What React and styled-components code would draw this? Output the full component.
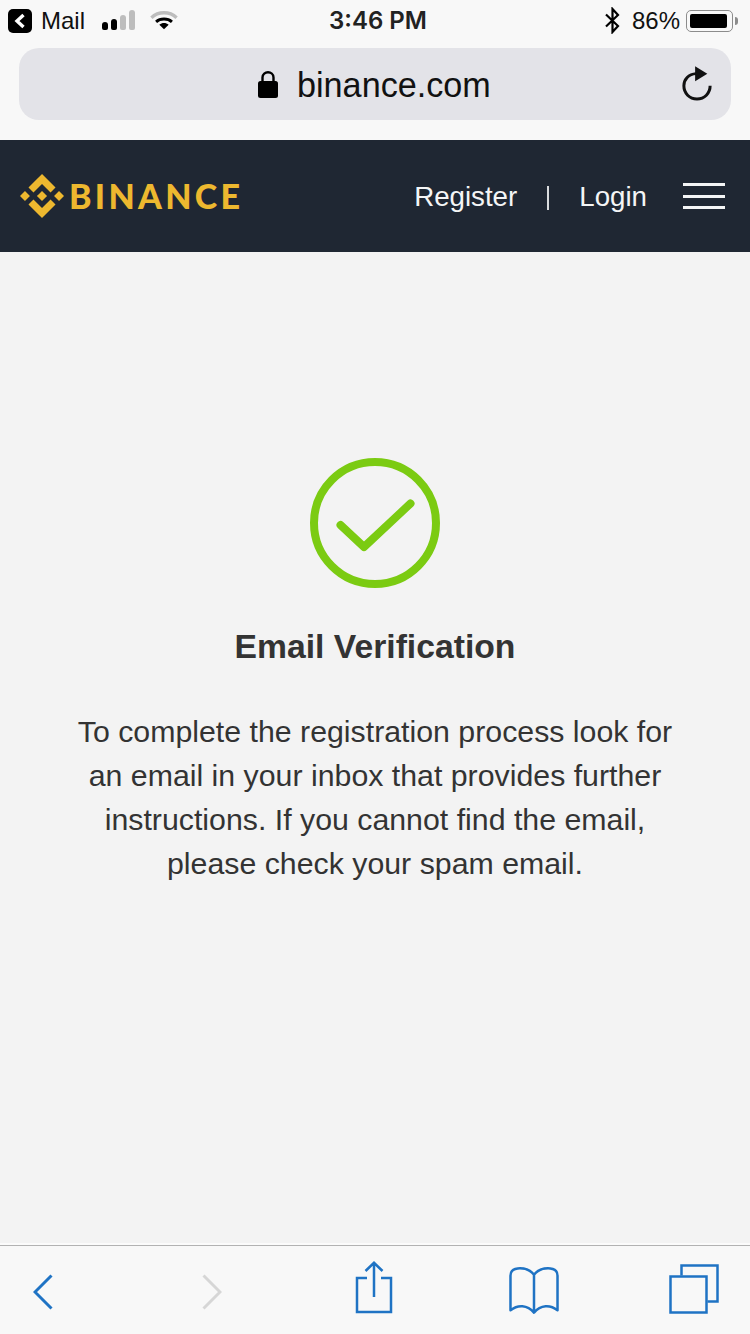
import React from "react";
import styled, { createGlobalStyle } from "styled-components";

const Global = createGlobalStyle`
    html, body {
        margin: 0;
        padding: 0;
        background: #f3f3f3;
    }
    * {
        box-sizing: border-box;
    }
`

const App = () => (
    <Page>
        <Global />
        <Chrome>
            <StatusBar>
                <StatusLeft>
                    <BackChip>
                        <svg width="12" height="16" viewBox="0 0 12 16">
                            <path d="M9.5 2 L3 8 L9.5 14" fill="none" stroke="#fff" strokeWidth="3.4" />
                        </svg>
                    </BackChip>
                    <StatusText>Mail</StatusText>
                    <Signal>
                        <Bar $h={8} $on />
                        <Bar $h={11} $on />
                        <Bar $h={15} />
                        <Bar $h={20} />
                    </Signal>
                    <svg width="28" height="21" viewBox="0 0 30 22">
                        <path d="M1.5 8 C9 1 21 1 28.5 8" fill="none" stroke="#bdbdbd" strokeWidth="3.6" />
                        <path d="M6.5 12.5 C11 8.5 19 8.5 23.5 12.5" fill="none" stroke="#000" strokeWidth="3.2" />
                        <path d="M10 15.5 C13 13.2 17 13.2 20 15.5 L15 20.5 Z" fill="#000" />
                    </svg>
                </StatusLeft>
                <Clock>3:46 PM</Clock>
                <StatusRight>
                    <svg width="17" height="27" viewBox="0 0 17 27">
                        <path d="M2 7.5 L14 19 L8.5 25 V2 L14 8 L2 19.5" fill="none" stroke="#000" strokeWidth="2.2" />
                    </svg>
                    <StatusText>86%</StatusText>
                    <Battery>
                        <BatteryFill />
                    </Battery>
                    <BatteryNub />
                </StatusRight>
            </StatusBar>
            <AddressBar>
                <AddressCenter>
                    <svg width="20" height="28" viewBox="0 0 20 28">
                        <path d="M4.5 13 V7.5 C4.5 0.5 15.5 0.5 15.5 7.5 V13" fill="none" stroke="#000" strokeWidth="2.4" />
                        <rect x="0" y="11" width="20" height="17" rx="2.5" fill="#000" />
                    </svg>
                    <Domain>binance.com</Domain>
                </AddressCenter>
                <Reload>
                    <svg width="30" height="36" viewBox="0 0 32 38">
                        <path d="M15 9 C7 9.5 2 15 2 22 C2 30 8 36 16 36 C24 36 30 30 30 22" fill="none" stroke="#111" strokeWidth="3.2" />
                        <path d="M14 1 L27 9 L14 17 Z" fill="#111" />
                    </svg>
                </Reload>
            </AddressBar>
        </Chrome>
        <Header>
            <Logo>
                <svg width="44" height="44" viewBox="0 0 126.61 126.61">
                    <path fill="#edb82f" d="M38.73 53.2l24.59-24.58 24.6 24.6 14.3-14.31L63.32 0 24.43 38.9l14.3 14.3zM0 63.31l14.3-14.31 14.31 14.31-14.31 14.3zM38.73 73.41l24.59 24.59 24.6-24.6 14.31 14.29-38.9 38.91-38.9-38.9-.01-.01zM98.01 63.31l14.3-14.31 14.31 14.3-14.31 14.31zM77.83 63.3L63.32 48.78 52.59 59.51l-1.24 1.23-2.54 2.54 14.51 14.5 14.51-14.47z" />
                </svg>
                <LogoText>BINANCE</LogoText>
            </Logo>
            <Nav>
                <NavLink>Register</NavLink>
                <NavSep />
                <NavLink>Login</NavLink>
                <Burger>
                    <BurgerLine />
                    <BurgerLine />
                    <BurgerLine />
                </Burger>
            </Nav>
        </Header>
        <Main>
            <svg width="130" height="130" viewBox="0 0 130 130">
                <circle cx="65" cy="65" r="61" fill="none" stroke="#7bcb12" strokeWidth="8" />
                <path d="M30.5 67 L54 89 L100.5 45.5" fill="none" stroke="#7bcb12" strokeWidth="8" strokeLinecap="round" strokeLinejoin="round" />
            </svg>
            <Title>Email Verification</Title>
            <Message>
                <span>To complete the registration process look for</span>
                <span>an email in your inbox that provides further</span>
                <span>instructions. If you cannot find the email,</span>
                <span>please check your spam email.</span>
            </Message>
        </Main>
        <Toolbar>
            <ToolIcon $left={33} $top={28} width="20" height="36" viewBox="0 0 20 36">
                <path d="M18.5 1.5 L2 18 L18.5 34.5" fill="none" stroke="#1f73c4" strokeWidth="3" />
            </ToolIcon>
            <ToolIcon $left={149} $top={28} width="20" height="36" viewBox="0 0 20 36">
                <path d="M1.5 1.5 L18 18 L1.5 34.5" fill="none" stroke="#d6d6d6" strokeWidth="3" />
            </ToolIcon>
            <ToolIcon $left={133} $top={15} width="38" height="53" viewBox="0 0 38 53">
                <path d="M12 17 H2 V51 H36 V17 H26" fill="none" stroke="#1f73c4" strokeWidth="2.5" />
                <path d="M19 36 V2 M10.5 10 L19 1.8 L27.5 10" fill="none" stroke="#1f73c4" strokeWidth="2.5" />
            </ToolIcon>
            <ToolIcon $left={116} $top={21} width="50" height="48" viewBox="0 0 52 50">
                <path d="M26 8 C22 3 15 1 9 1.5 C4.5 2 1.5 4.5 1.5 9 V45 C9 39 19 39 26 47.5 C33 39 43 39 50.5 45 V9 C50.5 4.5 47.5 2 43 1.5 C37 1 30 3 26 8 V47.5" fill="none" stroke="#1f73c4" strokeWidth="2.6" strokeLinejoin="round" />
            </ToolIcon>
            <ToolIcon $left={110} $top={18} width="50" height="50" viewBox="0 0 50 50">
                <path d="M12.5 11.5 V1.5 H48.5 V37.5 H38.5" fill="none" stroke="#1f73c4" strokeWidth="2.5" />
                <rect x="1.5" y="12.5" width="36" height="36" fill="none" stroke="#1f73c4" strokeWidth="2.5" />
            </ToolIcon>
        </Toolbar>
    </Page>
)

const Page = styled.div`
    width: 750px;
    height: 1334px;
    display: flex;
    flex-direction: column;
    overflow: hidden;
    font-family: "Liberation Sans", Arial, sans-serif;
`

const Chrome = styled.div`
    height: 140px;
    background: #f8f8f8;
    display: flex;
    flex-direction: column;
`

const StatusBar = styled.div`
    height: 48px;
    padding: 0 12px 7px 8px;
    display: grid;
    grid-template-columns: 1fr auto 1fr;
    align-items: center;
`

const StatusLeft = styled.div`
    display: flex;
    align-items: center;
`

const BackChip = styled.div`
    width: 24px;
    height: 24px;
    margin-right: 9px;
    border-radius: 5px;
    background: #000;
    display: flex;
    align-items: center;
    justify-content: center;
`

const StatusText = styled.span`
    font-size: 24px;
    color: #111;
`

const Signal = styled.div`
    width: 33px;
    height: 20px;
    margin: 0 15px 1px 17px;
    display: flex;
    align-items: flex-end;
    justify-content: space-between;
`

const Bar = styled.div`
    width: 6px;
    height: ${p => p.$h}px;
    border-radius: 3px 3px 2px 2px;
    background: ${p => (p.$on ? "#000" : "#bdbdbd")};
`

const Clock = styled.span`
    margin-left: 10px;
    font-family: Inter, "Liberation Sans", sans-serif;
    font-size: 24px;
    font-weight: 600;
    color: #222;
`

const StatusRight = styled.div`
    display: flex;
    align-items: center;
    justify-content: flex-end;

    svg {
        margin-right: 11px;
    }
`

const Battery = styled.div`
    width: 47px;
    height: 22px;
    margin-left: 6px;
    padding: 3px;
    border: 1.5px solid #8c8c8c;
    border-radius: 5px;
`

const BatteryFill = styled.div`
    width: 37px;
    height: 100%;
    border-radius: 2px;
    background: #000;
`

const BatteryNub = styled.div`
    width: 3px;
    height: 8px;
    margin-left: 2px;
    border-radius: 0 3px 3px 0;
    background: #8c8c8c;
`

const AddressBar = styled.div`
    width: 712px;
    height: 72px;
    margin-left: 19px;
    padding: 0 19px 0 239px;
    border-radius: 20px;
    background: #e3e3e8;
    display: flex;
    align-items: center;
    justify-content: space-between;
`

const AddressCenter = styled.div`
    display: flex;
    align-items: center;
    gap: 19px;
`

const Domain = styled.span`
    margin-top: 2px;
    font-size: 34.2px;
    line-height: 32px;
    color: #111;
`

const Reload = styled.div`
    display: flex;
    margin-bottom: 3px;
`

const Header = styled.div`
    height: 112px;
    padding: 0 25px 0 20px;
    background: #1f2733;
    display: flex;
    align-items: center;
    justify-content: space-between;
`

const Logo = styled.div`
    display: flex;
    align-items: center;
    gap: 7px;
`

const LogoText = styled.span`
    margin: -2px 0 0 -2px;
    font-family: Lato, "Liberation Sans", sans-serif;
    font-size: 34px;
    font-weight: 900;
    letter-spacing: 3.3px;
    color: #edb82f;
`

const Nav = styled.div`
    display: flex;
    align-items: center;
`

const NavLink = styled.span`
    padding-top: 2px;
    font-size: 27.7px;
    color: #f4f5f6;
`

const NavSep = styled.div`
    width: 2px;
    height: 24px;
    margin: 4px 30px 0 30px;
    background: #d9dbde;
`

const Burger = styled.div`
    width: 42px;
    height: 26px;
    margin-left: 36px;
    display: flex;
    flex-direction: column;
    justify-content: space-between;
`

const BurgerLine = styled.div`
    height: 3px;
    background: #f4f5f6;
`

const Main = styled.div`
    flex: 1;
    padding-top: 206px;
    background: #f3f3f3;
    display: flex;
    flex-direction: column;
    align-items: center;
`

const Title = styled.h1`
    margin: 38px 0 0;
    font-size: 33.7px;
    line-height: 40px;
    font-weight: 700;
    color: #333;
`

const Message = styled.p`
    margin: 44px 0 0;
    font-size: 30.3px;
    line-height: 44px;
    color: #333;
    display: flex;
    flex-direction: column;
    align-items: center;
    white-space: nowrap;
`

const Toolbar = styled.div`
    height: 89px;
    border-top: 1px solid #b2b2b2;
    box-shadow: 0 -2px 0 #fbfbfb;
    background: #f8f8f8;
    display: flex;
    align-items: flex-start;
`

const ToolIcon = styled.svg`
    flex: none;
    margin-left: ${p => p.$left}px;
    margin-top: ${p => p.$top}px;
`

export default App;
